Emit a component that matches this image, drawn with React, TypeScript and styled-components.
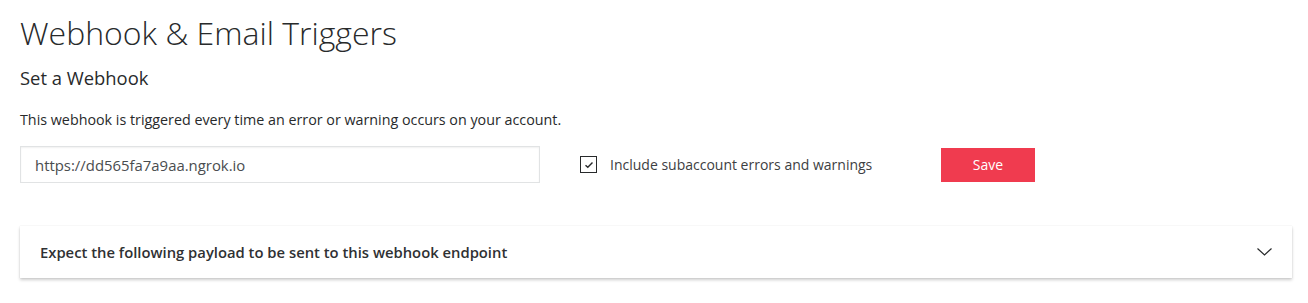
import React from "react";
import styled, { createGlobalStyle } from "styled-components";

const GlobalStyle = createGlobalStyle`
  body {
    margin: 0;
    background: #ffffff;
    font-family: "Open Sans", "Liberation Sans", sans-serif;
    color: #282a2b;
  }
`;

const Page = styled.div`
  padding: 13px 16px 25px 20px;
`;

const Title = styled.h1`
  margin: 0;
  font-size: 32px;
  font-weight: 300;
  line-height: 40px;
  color: #282a2b;
`;

const Subtitle = styled.h2`
  margin: 12px 0 0;
  font-size: 18.4px;
  font-weight: 400;
  line-height: 26px;
`;

const Description = styled.p`
  margin: 19px 0 0;
  font-size: 14.3px;
  line-height: 20px;
  color: #282a2b;
`;

const FormRow = styled.div`
  display: flex;
  align-items: center;
  margin-top: 16px;
  height: 37px;
`;

const UrlInput = styled.input`
  box-sizing: border-box;
  width: 520px;
  height: 37px;
  padding: 0 14px;
  border: 1px solid #e1e3e4;
  box-shadow: inset 0 1px 2px rgba(0, 0, 0, 0.06);
  font-family: inherit;
  font-size: 14.9px;
  color: #4a4d4f;
  outline: none;
`;

const CheckLabel = styled.label`
  display: flex;
  align-items: center;
  gap: 13px;
  margin-left: 40px;
  font-size: 14px;
  color: #3d4042;
`;

const Box = styled.span`
  box-sizing: border-box;
  width: 17px;
  height: 17px;
  border: 1px solid #282a2b;
  display: flex;
  align-items: center;
  justify-content: center;
`;

const SaveButton = styled.button`
  margin-left: auto;
  margin-right: 257px;
  width: 94px;
  height: 34px;
  border: none;
  background: #f03b4f;
  color: #ffffff;
  font-family: inherit;
  font-size: 14px;
  cursor: pointer;
`;

const Accordion = styled.div`
  margin-top: 43px;
  box-sizing: border-box;
  width: 1272px;
  height: 52px;
  display: flex;
  align-items: center;
  justify-content: space-between;
  padding: 0 20px;
  background: #ffffff;
  box-shadow: 0 0 1px rgba(0, 0, 0, 0.12), 0 2px 3px rgba(0, 0, 0, 0.2);
`;

const AccordionTitle = styled.span`
  font-size: 14.8px;
  font-weight: 600;
  color: #2f3133;
`;

export default function App() {
  return (
    <>
      <GlobalStyle />
      <Page>
        <Title>Webhook &amp; Email Triggers</Title>
        <Subtitle>Set a Webhook</Subtitle>
        <Description>
          This webhook is triggered every time an error or warning occurs on your account.
        </Description>
        <FormRow>
          <UrlInput defaultValue="https://dd565fa7a9aa.ngrok.io" />
          <CheckLabel>
            <Box>
              <svg width="10" height="8" viewBox="0 0 10 8">
                <path d="M1.5 4.2 L3.8 6.3 L8.5 1.5" fill="none" stroke="#282a2b" strokeWidth="1.4" />
              </svg>
            </Box>
            Include subaccount errors and warnings
          </CheckLabel>
          <SaveButton>Save</SaveButton>
        </FormRow>
        <Accordion>
          <AccordionTitle>Expect the following payload to be sent to this webhook endpoint</AccordionTitle>
          <svg width="15" height="8" viewBox="0 0 15 8">
            <path d="M0.5 0.5 L7.5 7 L14.5 0.5" fill="none" stroke="#282a2b" strokeWidth="1.2" />
          </svg>
        </Accordion>
      </Page>
    </>
  );
}
